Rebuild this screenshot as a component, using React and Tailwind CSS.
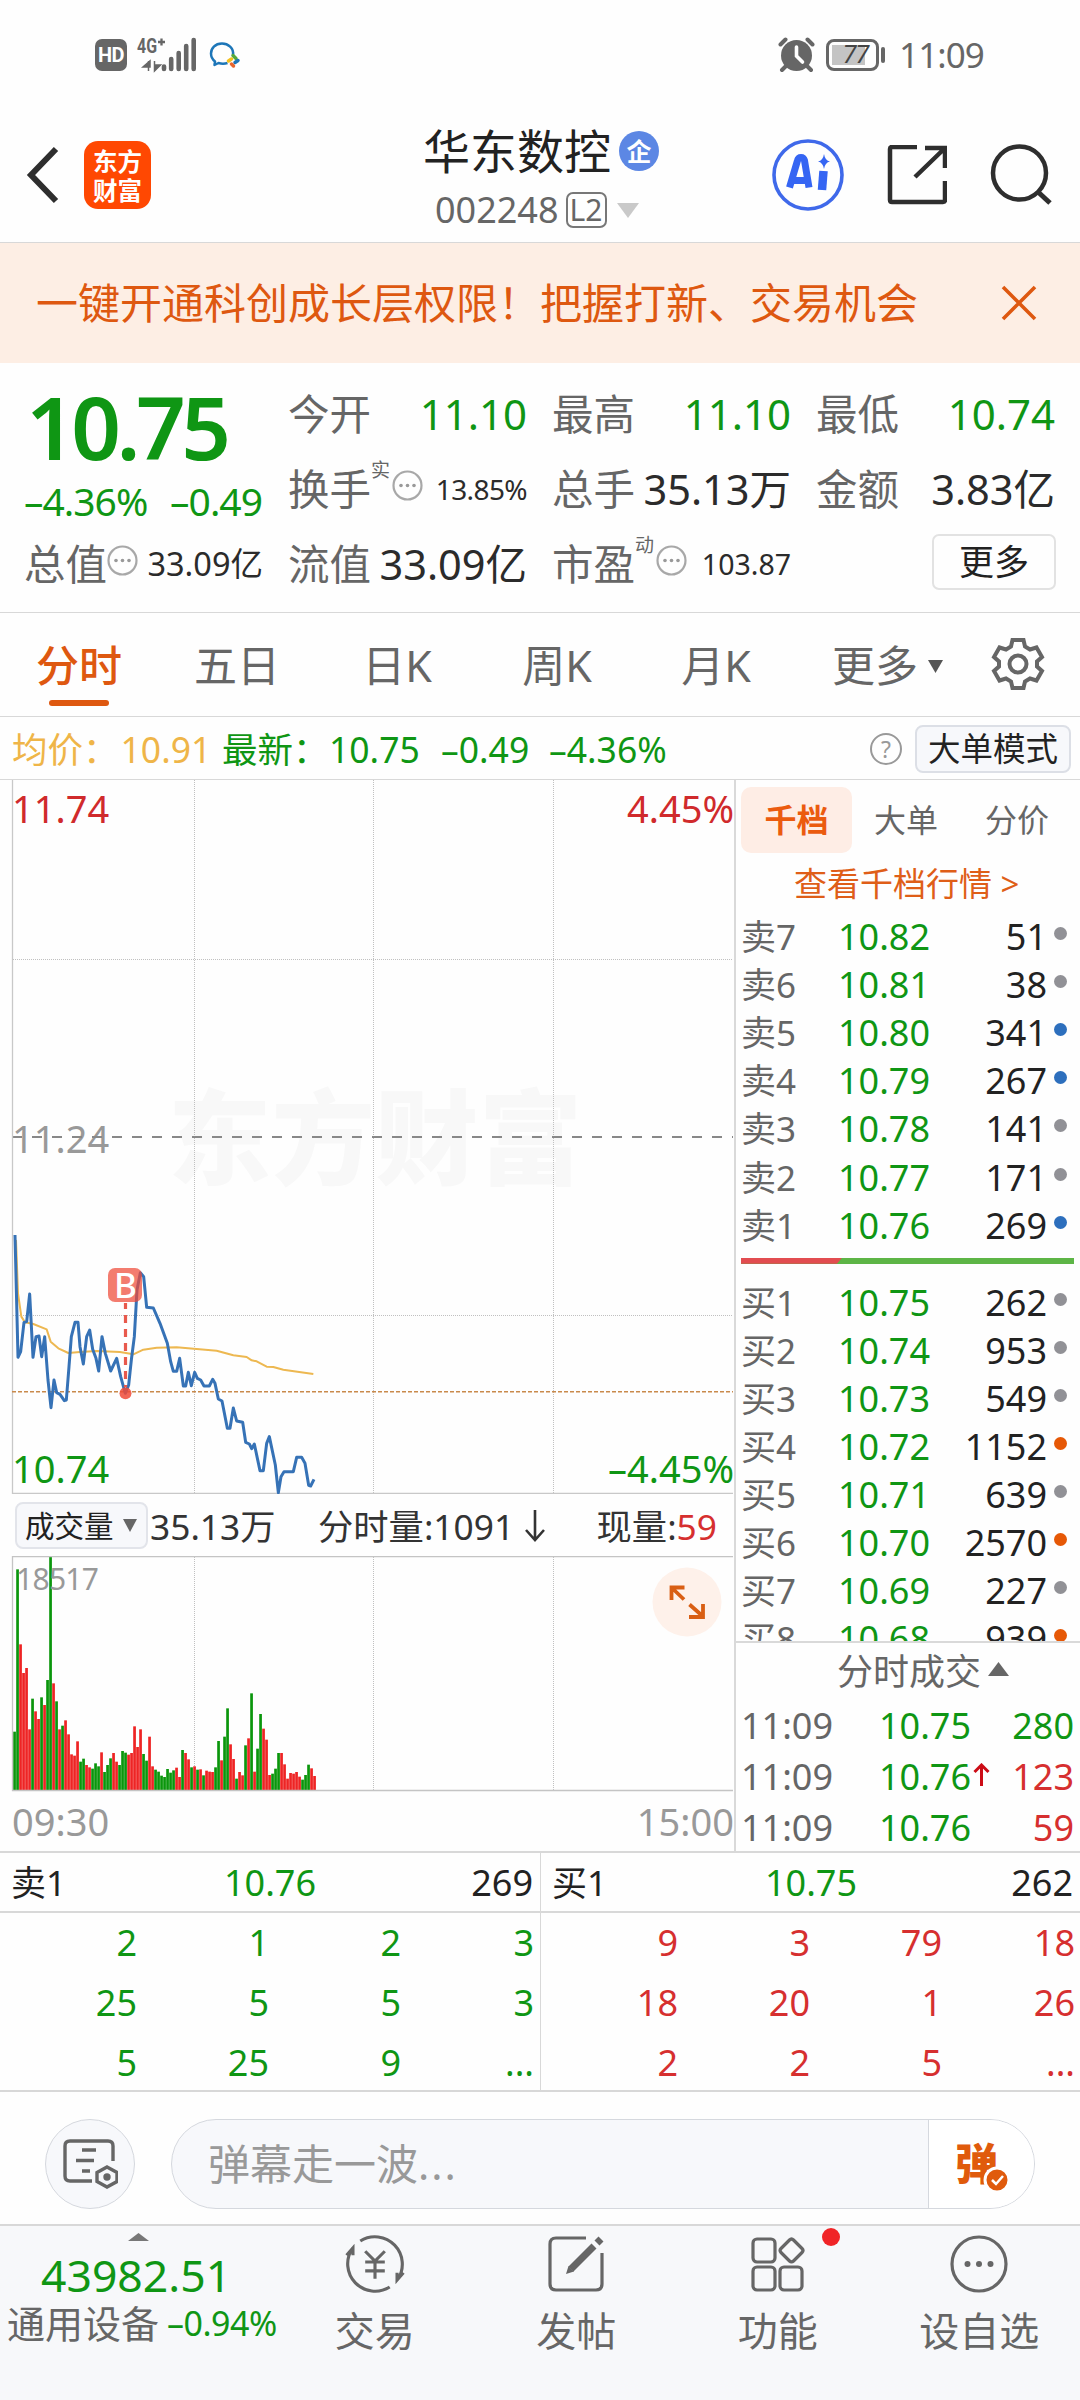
import React from "react";

const UP = "text-[#d62f2f]";
const DOWN = "text-[#0f9614]";

function StatusBar() {
  return (
    <div className="flex h-[108px] items-start justify-between pl-[95px] pr-[96px] pt-[34px] text-[#666]">
      <div className="flex h-[42px] items-center">
        <div className="flex h-[32px] w-[32px] items-center justify-center rounded-[7px] bg-[#666] font-['Roboto',sans-serif] text-[20px] font-bold leading-[32px] tracking-[-0.5px] text-white">HD</div>
        <svg className="ml-[9px]" width="62" height="38" viewBox="136 35 62 38">
          <text x="137" y="52" fontSize="20" fontWeight="700" fontFamily="Roboto, sans-serif" fill="#666" textLength="20" lengthAdjust="spacingAndGlyphs">4G</text>
          <path d="M158 41h7M161.500 37.500v7" stroke="#666" strokeWidth="2.300" />
          <path d="M143 66h7v-6zM148.500 60v10M154.500 60v10l6-6h-6" stroke="#666" strokeWidth="1.500" fill="#666" />
          <path d="M164 65.500v2.500M171.200 58v10M178.700 52v16M186.200 45v23M193.700 39v29" stroke="#666" strokeWidth="4.600" strokeLinecap="round" />
        </svg>
        <svg className="ml-[11px]" width="32" height="30" viewBox="209 39 32 30">
          <path d="M233 54c1-7-5-11.500-11-11.500-7 0-11 5-11 10 0 3 1.500 6 4 8l-.5 3.500 4-2c3 1 6 1 9 0" fill="none" stroke="#1d76b8" strokeWidth="2.500" strokeLinejoin="round" />
          <path d="M233 54.500l3 3" stroke="#53a93f" strokeWidth="3.500" strokeLinecap="round" /><path d="M238 59.500l-3 2" stroke="#1d76b8" strokeWidth="3.500" strokeLinecap="round" />
          <path d="M233.500 65l-2-2" stroke="#e8642c" strokeWidth="3.500" strokeLinecap="round" /><path d="M228.500 60l3-2" stroke="#f3c01d" strokeWidth="3.500" strokeLinecap="round" />
        </svg>
      </div>
      <div className="flex h-[42px] items-center">
        <svg width="38" height="36" viewBox="778 37 38 36">
          <circle cx="796.500" cy="55.500" r="15.500" fill="#666" />
          <path d="M780.500 44.500l5-5M812.500 44.500l-5-5M786 66l-4 4M807 66l4 4" stroke="#666" strokeWidth="4" strokeLinecap="round" />
          <path d="M796.500 47v9l6 6" stroke="#fff" strokeWidth="3.600" strokeLinecap="round" fill="none" />
        </svg>
        <div className="ml-[10px] flex h-[32px] w-[53px] items-center rounded-[8px] border-[3px] border-[#666] p-[3px]">
          <div className="flex h-[20px] w-[33px] items-center justify-end bg-[#c4c4c4]">
            <span className="mr-[-3px] font-['Roboto',sans-serif] text-[25px] italic leading-[20px] tracking-[-1px] text-[#444]">77</span>
          </div>
        </div>
        <div className="ml-[2px] h-[16px] w-[4px] rounded-full bg-[#666]" />
        <div className="ml-[14px] text-[35px] leading-[42px] tracking-[-0.9px]">11:09</div>
      </div>
    </div>
  );
}

function Header() {
  return (
    <div className="flex h-[135px] border-b border-[#d8d8d8]">
      <div className="flex w-[360px] items-center pl-[26px]">
        <svg width="34" height="58" viewBox="0 0 34 58"><path d="M30 3L5 29l25 26" fill="none" stroke="#2e2e2e" strokeWidth="6" /></svg>
        <div className="ml-[24px] flex h-[68px] w-[67px] flex-col items-center justify-center rounded-[14px] bg-[#ff4802] font-['Noto_Sans_CJK_SC',sans-serif] text-[24.500px] font-bold leading-[29px] text-white">
          <span>东方</span><span>财富</span>
        </div>
      </div>
      <div className="flex w-[364px] flex-col pl-[63px]">
        <div className="mt-[13px] flex h-[60px] items-center">
          <span className="text-[47px] leading-[60px] text-[#222]">华东数控</span>
          <span className="ml-[8px] flex h-[40px] w-[40px] items-center justify-center rounded-full bg-[#5c87e4] text-[25px] font-bold leading-[40px] text-white">企</span>
        </div>
        <div className="flex h-[58px] items-center pl-[12px]">
          <span className="text-[36px] leading-[48px] text-[#666]">002248</span>
          <span className="ml-[7px] flex h-[36px] w-[41px] items-center justify-center rounded-[7px] border-2 border-[#777] text-[30px] leading-[30px] text-[#666]">L2</span>
          <svg className="ml-[10px]" width="22" height="15"><path d="M0 0h22L11 15z" fill="#c9c9c9" /></svg>
        </div>
      </div>
      <div className="flex flex-1 items-center pl-[48px]">
        <svg width="72" height="72" viewBox="772 139 72 72">
          <circle cx="808" cy="175" r="34" fill="none" stroke="#3f69ea" strokeWidth="3.600" />
          <path d="M789.500 187.500l8-27q.8-3 3.500-3t3.500 3l4.500 27M793 180.500h13" fill="none" stroke="#3565f3" strokeWidth="7" strokeLinejoin="round" />
          <path d="M823.500 171l-1.500 19" stroke="#3565f3" strokeWidth="8.500" />
          <path d="M824 154q1 6.500 6 7.500-5 1-6 7.500-1-6.500-6-7.500 5-1 6-7.500z" fill="#3565f3" />
        </svg>
        <svg className="ml-[43px]" width="60" height="60" viewBox="886 146 60 60">
          <path d="M916 148h-25q-2 0-2 2v51q0 2 2 2h51q2 0 2-2v-19M924 149h20v20M943 150l-29 28" fill="none" stroke="#2e2e2e" strokeWidth="4.500" />
        </svg>
        <svg className="ml-[43px]" width="62" height="62" viewBox="989 144 62 62">
          <circle cx="1018.500" cy="173" r="26.500" fill="none" stroke="#2e2e2e" strokeWidth="4.500" /><path d="M1036 191l13 12" stroke="#2e2e2e" strokeWidth="5" />
        </svg>
      </div>
    </div>
  );
}

function Banner() {
  return (
    <div className="flex h-[120px] items-center justify-between bg-[#fdeee4] pl-[36px] pr-[43px] text-[#de5810]">
      <span className="text-[42px] leading-[60px]">一键开通科创成长层权限！把握打新、交易机会</span>
      <svg width="36" height="36" viewBox="0 0 36 36"><path d="M2 2l32 32M34 2L2 34" stroke="#de5810" strokeWidth="3.600" /></svg>
    </div>
  );
}

function Dots() {
  return (
    <svg className="mb-[7px]" width="31" height="31" viewBox="0 0 31 31">
      <circle cx="15.500" cy="15.500" r="14" fill="none" stroke="#a8a8a8" strokeWidth="2.200" />
      <circle cx="9" cy="15.500" r="1.800" fill="#999" /><circle cx="15.500" cy="15.500" r="1.800" fill="#999" /><circle cx="22" cy="15.500" r="1.800" fill="#999" />
    </svg>
  );
}

function Stat({ label, sup, dots, value, color = "text-[#2b2b2b]", size = "text-[42px]" }) {
  return (
    <div className="flex items-center justify-between">
      <div className="flex items-center">
        <span className="text-[41.500px] leading-[60px] text-[#666]">{label}</span>
        {sup && <span className="mb-[38px] w-[21px] text-[19px] leading-[22px] text-[#666]">{sup}</span>}
        {dots && <Dots />}
      </div>
      <span className={`${size} ${color} mr-[-1px] leading-[60px]`}>{value}</span>
    </div>
  );
}

function Quote() {
  return (
    <div className="grid h-[250px] grid-cols-[238px_238px_238px_238px] grid-rows-[75px_75px_75px] gap-x-[26px] border-b border-[#d8d8d8] pl-[24px] pt-[13px]">
      <div className={`row-span-2 ${DOWN}`}>
        <div className="mt-[5px] pl-[2px] text-[87px] font-semibold leading-[90px] tracking-[-4.500px]">10.75</div>
        <div className="mt-[3px] flex justify-between text-[39px] leading-[54px] tracking-[-1px]"><span>–4.36%</span><span>–0.49</span></div>
      </div>
      <Stat label="今开" value="11.10" color={DOWN} />
      <Stat label="最高" value="11.10" color={DOWN} />
      <Stat label="最低" value="10.74" color={DOWN} />
      <Stat label="换手" sup="实" dots value="13.85%" size="text-[28px] tracking-[-0.6px]" />
      <Stat label="总手" value="35.13万" size="text-[41.500px]" />
      <Stat label="金额" value="3.83亿" size="text-[41.500px]" />
      <Stat label="总值" dots value="33.09亿" size="text-[32.500px]" />
      <Stat label="流值" value="33.09亿" size="text-[41.500px]" />
      <Stat label="市盈" sup="动" dots value="103.87" size="text-[28.500px]" />
      <div className="flex items-center justify-end">
        <button className="mb-[4px] mr-[-2px] h-[56px] w-[124px] rounded-[7px] border-2 border-[#e2e2e2] text-[35px] leading-[48px] text-[#222]">更多</button>
      </div>
    </div>
  );
}

function Tabs() {
  return (
    <div className="flex h-[104px] items-center border-b border-[#d8d8d8] pt-[3px] text-[43px] leading-[60px] text-[#666]">
      <div className="relative w-[158px] pl-[36px] font-medium text-[#de5810]">分时
        <span className="absolute left-[49px] top-[64px] h-[6px] w-[60px] rounded-full bg-[#de5810]" />
      </div>
      <div className="w-[158px] text-center">五日</div>
      <div className="w-[162px] text-center">日K</div>
      <div className="w-[158px] text-center">周K</div>
      <div className="w-[160px] text-center">月K</div>
      <div className="flex w-[184px] items-center pl-[36px]">更多
        <svg className="ml-[10px]" width="15" height="13"><path d="M0 0h15L7.500 13z" fill="#555" /></svg>
      </div>
      <svg className="mb-[5px] ml-[11px]" width="54" height="54" viewBox="-27 -27 54 54" fill="none" stroke="#666" strokeWidth="4" strokeLinejoin="miter">
        <path d="M-5.500-24h11l1.500 6.500 5 3 6.500-2 5.500 9.500-5 4.500v5l5 4.500-5.500 9.500-6.500-2-5 3-1.500 6.500h-11l-1.500-6.500-5-3-6.500 2-5.500-9.500 5-4.500v-5l-5-4.500 5.500-9.500 6.500 2 5-3z" />
        <circle r="8.500" />
      </svg>
    </div>
  );
}

function InfoRow() {
  return (
    <div className="flex h-[63px] items-center border-b border-[#d8d8d8] pl-[12px] pr-[9px] pt-[1px] text-[35.500px] leading-[50px]">
      <span className="w-[210px] text-[#efb548]">均价：<span className="ml-[2px]">10.91</span></span>
      <span className={`w-[107px] ${DOWN}`}>最新：</span>
      <span className={`w-[112px] ${DOWN}`}>10.75</span>
      <span className={`w-[108px] ${DOWN}`}>–0.49</span>
      <span className={DOWN}>–4.36%</span>
      <div className="ml-auto flex items-center">
        <span className="flex h-[32px] w-[32px] items-center justify-center rounded-full border-[2.500px] border-[#999] text-[23px] leading-[26px] text-[#999]">?</span>
        <span className="ml-[13px] flex h-[48px] w-[156px] items-center justify-center rounded-[8px] border-2 border-[#dcdfe6] bg-[#f7f8fb] text-[32.500px] leading-[44px] text-[#222]">大单模式</span>
      </div>
    </div>
  );
}

const PRICE =
  "45,165 54,532 62,515 72,427 80,425 89,342 99,532 108,470 117,468 125,530 134,470 144,600 153,683 162,600 170,638 180,643 193,662 199,660 207,560 214,470 225,427 234,427 240,500 250,552 260,470 269,450 278,508 288,535 296,573 306,470 316,520 332,573 350,535 362,590 376,640 386,615 394,540 403,470 411,330 421,278 431,290 440,382 460,384 480,430 502,490 512,545 520,574 530,574 539,535 550,618 557,618 565,577 574,617 584,577 592,595 602,600 612,618 628,618 638,598 645,610 655,657 666,663 682,745 690,745 700,684 710,723 728,727 737,787 748,792 755,806 763,792 780,872 790,872 800,790 808,770 826,855 835,938 843,890 852,875 880,875 890,832 905,832 915,850 926,916 932,918 942,898";
const AVERAGE =
  "48,180 54,340 64,410 75,427 100,432 140,448 152,485 175,505 205,519 240,516 290,513 360,516 400,523 430,509 470,503 530,502 590,507 650,512 700,526 740,531 755,541 770,544 800,560 820,561 850,569 940,582";

function PriceChart() {
  return (
    <svg className="block" width="734" height="714" viewBox="0 780 734 714" fontFamily="'Noto Sans', sans-serif">
      <text x="168" y="1177" fontSize="103" fontWeight="900" fontFamily="'Noto Sans CJK SC', sans-serif" fill="#f8f8f8" textLength="414">东方财富</text>
      <path d="M194.500 780v713M373.500 780v713M553.500 780v713M13 959.500h720M13 1315.500h720" stroke="#c0c0c0" strokeWidth="1" strokeDasharray="1 1" />
      <text x="12" y="1153" fontSize="38" fill="#999">11.24</text>
      <path d="M12 1137h721" stroke="#888" strokeWidth="2" strokeDasharray="10 10" />
      <path d="M12.500 780v713.500H733" fill="none" stroke="#c8c8c8" strokeWidth="1.300" />
      <path d="M12 1391.700h721" stroke="#c98a4c" strokeWidth="1.500" strokeDasharray="4 2" />
      <g transform="translate(0 1180) scale(.33333)" fill="none" strokeLinejoin="round">
        <polyline points={AVERAGE} stroke="#edb851" strokeWidth="6" />
        <polyline points={PRICE} stroke="#3672b6" strokeWidth="9" />
      </g>
      <path d="M125.500 1303v84" stroke="#e8594c" strokeWidth="3.200" strokeDasharray="8 6" strokeDashoffset="2" />
      <circle cx="125.500" cy="1393.300" r="6" fill="#f04a38" fillOpacity=".85" />
      <rect x="108" y="1268" width="34" height="34" rx="7" fill="#ef4a38" fillOpacity=".72" />
      <text x="125.500" y="1297.500" fontSize="35" fontWeight="500" textAnchor="middle" fill="#fff">B</text>
      <text x="12" y="823" fontSize="38" fill="#d02a2c">11.74</text>
      <text x="734" y="823" fontSize="38" fill="#d02a2c" textAnchor="end">4.45%</text>
      <text x="12" y="1483" fontSize="38" fill="#0f9614">10.74</text>
      <text x="734" y="1483" fontSize="38" fill="#0f9614" textAnchor="end">–4.45%</text>
    </svg>
  );
}

const BARS =
  "g545,g58,r283,r369,r354,r538,g446,r484,r507,g442,r465,g390,g20,r400,g454,r538,g527,r511,r553,r613,r617,r574,g635,g626,r645,r652,g656,g640,g649,r607,g666,g645,g625,r609,r635,g645,g603,g608,r614,r609,r529,r591,r538,g612,g632,r560,r649,g659,g665,g677,g681,g657,g668,g661,r653,r681,g600,r609,r628,g652,r649,g659,r658,g676,r662,r665,r666,g652,g573,r631,g560,g475,r583,r627,g686,r666,r676,g586,r565,g430,r665,g596,g492,r536,r569,r675,g671,g656,g609,r609,r643,r686,r669,r671,r666,r680,g689,g675,g644,r655,r678".split(",");

function VolumeChart() {
  return (
    <svg className="block" width="734" height="236" viewBox="0 1556 734 236">
      <path d="M194.500 1557v233M373.500 1557v233M553.500 1557v233" stroke="#c0c0c0" strokeWidth="1" strokeDasharray="1 1" />
      {BARS.map((bar, i) => {
        const top = 1550 + Number(bar.slice(1)) / 3;
        return <rect key={i} x={13.2 + i * 3} y={top} width="2.700" height={1790 - top} fill={bar[0] === "r" ? "#ee2424" : "#0a960c"} />;
      })}
      <text x="16" y="1590" fontSize="30" fill="#999" fontFamily="'Noto Sans', sans-serif" textLength="83">18517</text>
      <path d="M733 1556.500H12.500V1790.500H733" fill="none" stroke="#c4c4c4" strokeWidth="1.300" />
      <circle cx="687" cy="1602" r="34.500" fill="#fef1ea" />
      <path d="M671.500 1600v-12.500h13M672 1588l12 11.500M703 1604v13h-14M702.500 1616l-13-11.500" fill="none" stroke="#d95f14" strokeWidth="3.800" />
    </svg>
  );
}

function VolumeInfo() {
  return (
    <div className="flex h-[62px] items-center pl-[15px] pt-[1px] text-[35.300px] leading-[50px] text-[#333]">
      <span className="flex h-[47px] w-[133px] items-center rounded-[8px] border-2 border-[#e2e4ea] bg-[#f7f8fb] pl-[8px] text-[29.500px] leading-[44px] text-[#222]">成交量
        <svg className="ml-[9px]" width="14" height="13"><path d="M0 0h14L7 13z" fill="#666" /></svg>
      </span>
      <span className="ml-[2px] w-[168px]">35.13万</span>
      <span>分时量:1091</span>
      <svg className="ml-[11px]" width="20" height="32" viewBox="0 0 20 32"><path d="M10 0v30M1 20l9 10 9-10" fill="none" stroke="#333" strokeWidth="2.600" /></svg>
      <span className="ml-auto mr-[17px]">现量:<span className={UP}>59</span></span>
    </div>
  );
}

const SELLS = [["卖7", "10.82", 51, "n"], ["卖6", "10.81", 38, "n"], ["卖5", "10.80", 341, "b"], ["卖4", "10.79", 267, "b"], ["卖3", "10.78", 141, "n"], ["卖2", "10.77", 171, "n"], ["卖1", "10.76", 269, "b"]];
const BUYS = [["买1", "10.75", 262, "n"], ["买2", "10.74", 953, "n"], ["买3", "10.73", 549, "n"], ["买4", "10.72", 1152, "o"], ["买5", "10.71", 639, "n"], ["买6", "10.70", 2570, "o"], ["买7", "10.69", 227, "n"], ["买8", "10.68", 939, "o"]];
const DOT = { n: "bg-[#919196]", b: "bg-[#2d6fbd]", o: "bg-[#e65806]" };

function Level({ row }) {
  return (
    <div className="flex h-[48.100px] shrink-0 items-center text-[36px] leading-[48px]">
      <span className="w-[97px] text-[35px] text-[#666]">{row[0]}</span>
      <span className={DOWN}>{row[1]}</span>
      <span className="ml-auto text-[#222]">{row[2]}</span>
      <span className={`mb-[7px] ml-[7px] mr-[13px] h-[13px] w-[13px] rounded-full ${DOT[row[3]]}`} />
    </div>
  );
}

const TRADES = [["10.75", false, 280, DOWN], ["10.76", true, 123, UP], ["10.76", false, 59, UP]];

function OrderBook() {
  return (
    <div className="flex h-[1071px] w-[346px] flex-col border-l-2 border-[#d9d9d9]">
      <div className="flex h-[863px] shrink-0 flex-col overflow-hidden border-b-2 border-[#d9d9d9] pl-[5px]">
        <div className="mt-[6px] flex h-[67px] shrink-0 items-center text-[32px] leading-[44px] text-[#666]">
          <span className="flex h-[66px] w-[111px] items-center justify-center rounded-[10px] bg-[#feede5] font-bold text-[#eb5b0f]">千档</span>
          <span className="ml-[22px]">大单</span>
          <span className="ml-[47px]">分价</span>
        </div>
        <div className="h-[60px] shrink-0 pl-[53px] text-[33px] leading-[62px] text-[#df5e18]">查看千档行情 &gt;</div>
        {SELLS.map((row) => <Level key={row[0]} row={row} />)}
        <div className="mb-[15px] mt-[8px] flex h-[6px] w-[333px] shrink-0 bg-[#5db546]">
          <div className="w-[101px] bg-[#e24c50] [clip-path:polygon(0_0,100%_0,95%_100%,0_100%)]" />
        </div>
        {BUYS.map((row) => <Level key={row[0]} row={row} />)}
      </div>
      <div className="flex h-[57px] shrink-0 items-center pl-[101px] text-[36px] leading-[50px] text-[#666]">分时成交
        <svg className="mb-[6px] ml-[7px]" width="21" height="14"><path d="M0 14h21L10.500 0z" fill="#666" /></svg>
      </div>
      {TRADES.map((t, i) => (
        <div key={i} className="flex h-[51px] shrink-0 items-center pl-[5px] pr-[6px] text-[36px] leading-[48px]">
          <span className="w-[138px] text-[#666]">11:09</span>
          <span className={DOWN}>{t[0]}</span>
          {t[1] && <svg className="mb-[4px] ml-[2px]" width="17" height="23" viewBox="0 0 17 23"><path d="M8.500 23V2M1.500 9l7-7 7 7" fill="none" stroke="#cc0c16" strokeWidth="3" /></svg>}
          <span className={`ml-auto ${t[3]}`}>{t[2]}</span>
        </div>
      ))}
    </div>
  );
}

function Queue({ head, color, rows, side }) {
  return (
    <div className={side}>
      <div className="flex h-[60px] items-center border-b-2 border-[#d8d8d8] pl-[11px] pr-[7px] pt-[2px] text-[36px] leading-[50px] text-[#222]">
        <span className="w-[213px] text-[35px]">{head[0]}</span>
        <span className={DOWN}>{head[1]}</span>
        <span className="ml-auto">{head[2]}</span>
      </div>
      <div className={`grid h-[179px] grid-cols-[137px_132px_132px_133px] grid-rows-[60px_60px_59px] items-center text-right text-[36px] leading-[50px] ${color}`}>
        {rows.map((n, i) => <span key={i}>{n}</span>)}
      </div>
    </div>
  );
}

function Comment() {
  return (
    <div className="flex h-[132px] items-center pl-[45px] pt-[12px]">
      <span className="flex h-[90px] w-[90px] items-center justify-center rounded-full border-[1.500px] border-[#d5d8de] bg-[#f7f8fb]">
        <svg width="56" height="52" viewBox="63 2140 56 52" fill="none" stroke="#666" strokeWidth="3.400">
          <path d="M114 2163v-15q0-5-5-5H71q-5 0-5 5v30q0 5 5 5h22M83 2152h14M77 2162.500h18M83 2173h8" />
          <path d="M108 2169l10 5.500v9l-10 5.500-10-5.500v-9z" /><circle cx="108" cy="2179" r="2" fill="#666" />
        </svg>
      </span>
      <div className="ml-[36px] flex h-[90px] w-[864px] overflow-hidden rounded-full border-[1.500px] border-[#d5d8de] bg-[#f7f8fb]">
        <span className="w-[756px] pl-[36px] text-[42px] leading-[88px] text-[#999]">弹幕走一波<span className="tracking-[2px]">...</span></span>
        <span className="relative flex-1 border-l-[1.500px] border-[#d5d8de] bg-white pl-[26px] font-['Noto_Sans_CJK_SC',sans-serif] text-[43px] font-black leading-[82px] text-[#e05b0c]">弹
          <svg className="absolute left-[54px] top-[46px]" width="28" height="28" viewBox="-14 -14 28 28"><circle r="12" fill="#e05b0c" stroke="#fff" strokeWidth="3" /><path d="M-5 0l4 4 7-8" fill="none" stroke="#fff" strokeWidth="2.500" /></svg>
        </span>
      </div>
    </div>
  );
}

function NavItem({ label, children, badge }) {
  return (
    <div className="relative flex w-[201.500px] flex-col items-center pt-[7px] text-[40px] leading-[50px] text-[#666]">
      <svg width="66" height="62" viewBox="-33 -31 66 62" fill="none" stroke="#666" strokeWidth="3.200">{children}</svg>
      <span className="mt-[11px]">{label}</span>
      {badge && <i className="absolute left-[145px] top-[2px] h-[18px] w-[18px] rounded-full bg-[#f02427]" />}
    </div>
  );
}

function BottomNav() {
  return (
    <div className="flex h-[177px] border-t-2 border-[#d8d8d8] bg-[#f7f8fa]">
      <div className="w-[274px] whitespace-nowrap">
        <svg className="ml-[128px] mt-[7px] block" width="21" height="8"><path d="M0 8h21L10.500 0z" fill="#777" /></svg>
        <div className={`ml-[41px] mt-[7px] text-[44.500px] leading-[54px] ${DOWN}`}>43982.51</div>
        <div className="ml-[7px] mt-[-2px] flex items-center text-[38px] leading-[46px] text-[#666]">通用设备<span className={`ml-[8px] text-[34px] tracking-[-0.5px] ${DOWN}`}>–0.94%</span></div>
      </div>
      <NavItem label="交易">
        <path d="M-15-23.500A28 28 0 0 1 23 16M29 9l-6.500 7.500V9M15 23.500A28 28 0 0 1-23-16M-29-9l6.500-7.500V-9M-10-13L0-3 10-13M0-3v18M-10-2h20M-10 7h20" transform="scale(.98)" />
      </NavItem>
      <NavItem label="发帖">
        <path d="M10-26h-30q-6 0-6 6v40q0 6 6 6h40q6 0 6-6v-31" /><path d="M-5 5L18-18" strokeWidth="7" /><path d="M21-21l4-4" strokeWidth="7" /><path d="M-10 10l2.500-8 5.500 5.500z" fill="#666" stroke="none" />
      </NavItem>
      <NavItem label="功能" badge>
        <rect x="-25" y="-25" width="22" height="23" rx="4" /><rect x="-25" y="3" width="22" height="23" rx="4" /><rect x="2" y="3" width="22" height="23" rx="4" />
        <path d="M11.500-24q2-2 4 0l8.500 8.500q2 2 0 4l-8.500 8.500q-2 2-4 0L3-11.500q-2-2 0-4z" />
      </NavItem>
      <NavItem label="设自选">
        <circle r="27" /><g fill="#666" stroke="none"><circle cx="-11.500" r="3" /><circle r="3" /><circle cx="11.500" r="3" /></g>
      </NavItem>
    </div>
  );
}

export default function App() {
  return (
    <div className="h-[2400px] w-[1080px] overflow-hidden whitespace-nowrap bg-[#fefefe] font-['Noto_Sans','Noto_Sans_CJK_SC',sans-serif]">
      <StatusBar />
      <Header />
      <Banner />
      <Quote />
      <Tabs />
      <InfoRow />
      <div className="flex h-[1071px]">
        <div className="w-[734px]">
          <PriceChart />
          <VolumeInfo />
          <VolumeChart />
          <div className="flex h-[57px] items-center justify-between pl-[12px] text-[38px] leading-[50px] text-[#999]"><span>09:30</span><span>15:00</span></div>
        </div>
        <OrderBook />
      </div>
      <div className="flex h-[241px] border-y-2 border-[#d8d8d8]">
        <Queue side="w-[541px] border-r border-[#d8d8d8]" head={["卖1", "10.76", "269"]} color={DOWN} rows={["2", "1", "2", "3", "25", "5", "5", "3", "5", "25", "9", "..."]} />
        <Queue side="w-[539px]" head={["买1", "10.75", "262"]} color={UP} rows={["9", "3", "79", "18", "18", "20", "1", "26", "2", "2", "5", "..."]} />
      </div>
      <Comment />
      <BottomNav />
    </div>
  );
}
